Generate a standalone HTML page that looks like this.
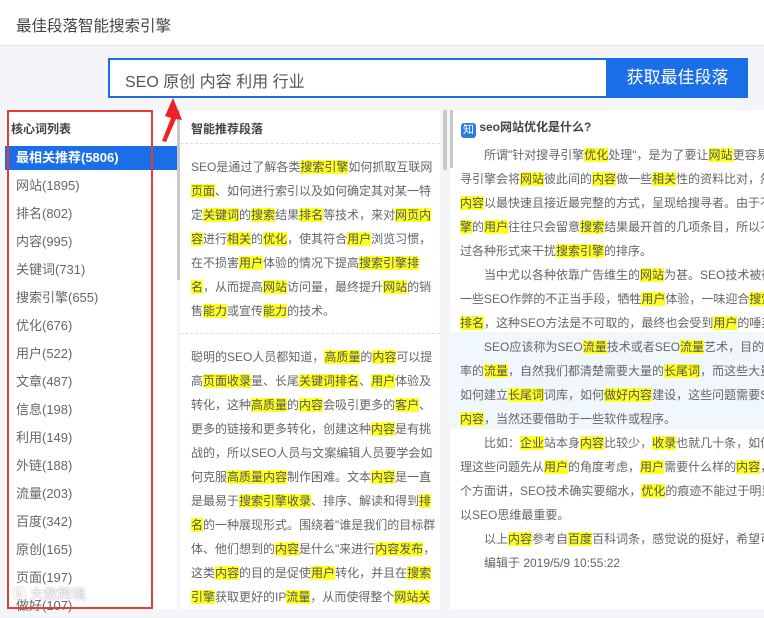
<!DOCTYPE html>
<html><head><meta charset="utf-8"><style>
*{margin:0;padding:0;box-sizing:border-box}
body{width:764px;height:609px;overflow:hidden;background:#f3f5f8;font-family:"Liberation Sans","Noto Sans CJK SC",sans-serif;color:#555;position:relative}
.hdr{position:absolute;left:0;top:0;width:764px;height:46px;background:#fff;border-bottom:1px solid #e3e3e3}
.hdr span{position:absolute;left:16px;top:14px;font-size:15.5px;color:#444}
.inp{position:absolute;left:108px;top:58px;width:500px;height:40px;border:2px solid #1a6fe0;background:#fff;font-size:16px;color:#555;padding:8px 0 0 15px}
.btn{position:absolute;left:607px;top:58px;width:141px;height:40px;background:#1a6fe8;color:#fff;font-size:17px;text-align:center;line-height:40px}
.p1{position:absolute;left:5px;top:110px;width:172px;height:499px;background:#fff}
.p2{position:absolute;left:180px;top:110px;width:260px;height:499px;background:#fff;overflow:hidden}
.p3{position:absolute;left:450px;top:110px;width:314px;height:499px;background:#fff;overflow:hidden}
.sb{position:absolute;width:4px;background:#c8c8c8}
.h{font-size:12px;font-weight:bold;color:#444;position:absolute;top:10px}
.li{position:absolute;left:0;width:172px;height:24px;font-size:13px;line-height:24px;padding-left:11px;color:#666}
.li.sel{background:#1a6fe8;color:#fff;font-weight:bold}
.red{position:absolute;left:7px;top:110px;width:146px;height:499px;border:2px solid #e53b3b}
.ln{white-space:nowrap;font-size:12px;line-height:24px;height:24px;color:#666}
b{font-weight:normal;background:#ffff22;color:#555}
.dash{position:absolute;left:0;right:0;border-top:1px dashed #ddd}
</style></head><body>
<div class="hdr"><span>最佳段落智能搜索引擎</span></div>
<div class="inp">SEO 原创 内容 利用 行业</div>
<div class="btn">获取最佳段落</div>

<div class="p1">
<div class="h" style="left:6px">核心词列表</div>
<div class="li sel" style="top:36px">最相关推荐(5806)</div>
<div class="li" style="top:64px">网站(1895)</div>
<div class="li" style="top:92px">排名(802)</div>
<div class="li" style="top:120px">内容(995)</div>
<div class="li" style="top:148px">关键词(731)</div>
<div class="li" style="top:176px">搜索引擎(655)</div>
<div class="li" style="top:204px">优化(676)</div>
<div class="li" style="top:232px">用户(522)</div>
<div class="li" style="top:260px">文章(487)</div>
<div class="li" style="top:288px">信息(198)</div>
<div class="li" style="top:316px">利用(149)</div>
<div class="li" style="top:344px">外链(188)</div>
<div class="li" style="top:372px">流量(203)</div>
<div class="li" style="top:400px">百度(342)</div>
<div class="li" style="top:428px">原创(165)</div>
<div class="li" style="top:456px">页面(197)</div>
<div class="li" style="top:484px">做好(107)</div>
</div>
<div class="sb" style="left:177px;top:110px;height:170px"></div>
<div class="red"></div>

<div class="p2">
<div class="h" style="left:11px">智能推荐段落</div>
<div class="dash" style="top:33px"></div>
<div style="position:absolute;left:11px;top:45px">
<div class="ln">SEO是通过了解各类<b>搜索引擎</b>如何抓取互联网</div>
<div class="ln"><b>页面</b>、如何进行索引以及如何确定其对某一特</div>
<div class="ln">定<b>关键词</b>的<b>搜索</b>结果<b>排名</b>等技术，来对<b>网页内</b></div>
<div class="ln"><b>容</b>进行<b>相关</b>的<b>优化</b>，使其符合<b>用户</b>浏览习惯，</div>
<div class="ln">在不损害<b>用户</b>体验的情况下提高<b>搜索引擎排</b></div>
<div class="ln"><b>名</b>，从而提高<b>网站</b>访问量，最终提升<b>网站</b>的销</div>
<div class="ln">售<b>能力</b>或宣传<b>能力</b>的技术。</div>
</div>
<div class="dash" style="top:223px"></div>
<div style="position:absolute;left:11px;top:235px">
<div class="ln">聪明的SEO人员都知道，<b>高质量</b>的<b>内容</b>可以提</div>
<div class="ln">高<b>页面收录</b>量、长尾<b>关键词排名</b>、<b>用户</b>体验及</div>
<div class="ln">转化，这种<b>高质量</b>的<b>内容</b>会吸引更多的<b>客户</b>、</div>
<div class="ln">更多的链接和更多转化，创建这种<b>内容</b>是有挑</div>
<div class="ln">战的，所以SEO人员与文案编辑人员要学会如</div>
<div class="ln">何克服<b>高质量内容</b>制作困难。文本<b>内容</b>是一直</div>
<div class="ln">是最易于<b>搜索引擎收录</b>、排序、解读和得到<b>排</b></div>
<div class="ln"><b>名</b>的一种展现形式。围绕着"谁是我们的目标群</div>
<div class="ln">体、他们想到的<b>内容</b>是什么"来进行<b>内容发布</b>，</div>
<div class="ln">这类<b>内容</b>的目的是促使<b>用户</b>转化，并且在<b>搜索</b></div>
<div class="ln"><b>引擎</b>获取更好的IP<b>流量</b>，从而使得整个<b>网站关</b></div>
</div>
</div>
<div class="sb" style="left:443px;top:110px;height:60px"></div>

<div class="p3">
<div class="h" style="left:11px;top:8px"><span style="display:inline-block;width:15px;height:15px;background:#2a7de1;color:#fff;border-radius:3px;font-size:11px;text-align:center;line-height:15px;font-weight:normal;vertical-align:-2px">知</span> seo网站优化是什么?</div>
<div style="position:absolute;left:0;top:222px;width:314px;height:97px;background:#f0f8fd"></div>
<div style="position:absolute;left:10px;top:33px">
<div class="ln">　　所谓"针对搜寻引擎<b>优化</b>处理"，是为了要让<b>网站</b>更容易被搜</div>
<div class="ln">寻引擎会将<b>网站</b>彼此间的<b>内容</b>做一些<b>相关</b>性的资料比对，然后</div>
<div class="ln"><b>内容</b>以最快速且接近最完整的方式，呈现给搜寻者。由于不少</div>
<div class="ln"><b>擎</b>的<b>用户</b>往往只会留意<b>搜索</b>结果最开首的几项条目，所以不少</div>
<div class="ln">过各种形式来干扰<b>搜索引擎</b>的排序。</div>
<div class="ln">　　当中尤以各种依靠广告维生的<b>网站</b>为甚。SEO技术被很多</div>
<div class="ln">一些SEO作弊的不正当手段，牺牲<b>用户</b>体验，一味迎合<b>搜索</b></div>
<div class="ln"><b>排名</b>，这种SEO方法是不可取的，最终也会受到<b>用户</b>的唾弃。</div>
<div class="ln">　　SEO应该称为SEO<b>流量</b>技术或者SEO<b>流量</b>艺术，目的是</div>
<div class="ln">率的<b>流量</b>，自然我们都清楚需要大量的<b>长尾词</b>，而这些大量</div>
<div class="ln">如何建立<b>长尾词</b>词库，如何<b>做好内容</b>建设，这些问题需要SEO</div>
<div class="ln"><b>内容</b>，当然还要借助于一些软件或程序。</div>
<div class="ln">　　比如：<b>企业</b>站本身<b>内容</b>比较少，<b>收录</b>也就几十条，如何</div>
<div class="ln">理这些问题先从<b>用户</b>的角度考虑，<b>用户</b>需要什么样的<b>内容</b>，</div>
<div class="ln">个方面讲，SEO技术确实要缩水，<b>优化</b>的痕迹不能过于明显</div>
<div class="ln">以SEO思维最重要。</div>
<div class="ln">　　以上<b>内容</b>参考自<b>百度</b>百科词条，感觉说的挺好，希望可以</div>
<div class="ln">　　编辑于 2019/5/9 10:55:22</div>
</div>
</div>
<div class="sb" style="left:450px;top:110px;height:58px;width:3px"></div>

<svg style="position:absolute;left:150px;top:92px" width="40" height="60" viewBox="0 0 40 60">
<polygon points="23,6 32,28 26,27 16,50 12,49 21,26 15,24" fill="#ee2222"/>
</svg>
<div style="position:absolute;left:12px;top:584px;font-size:14px;color:rgba(255,255,255,0.85);text-shadow:0 0 2px #999">ⓚ 大数跨境</div>
</body></html>
